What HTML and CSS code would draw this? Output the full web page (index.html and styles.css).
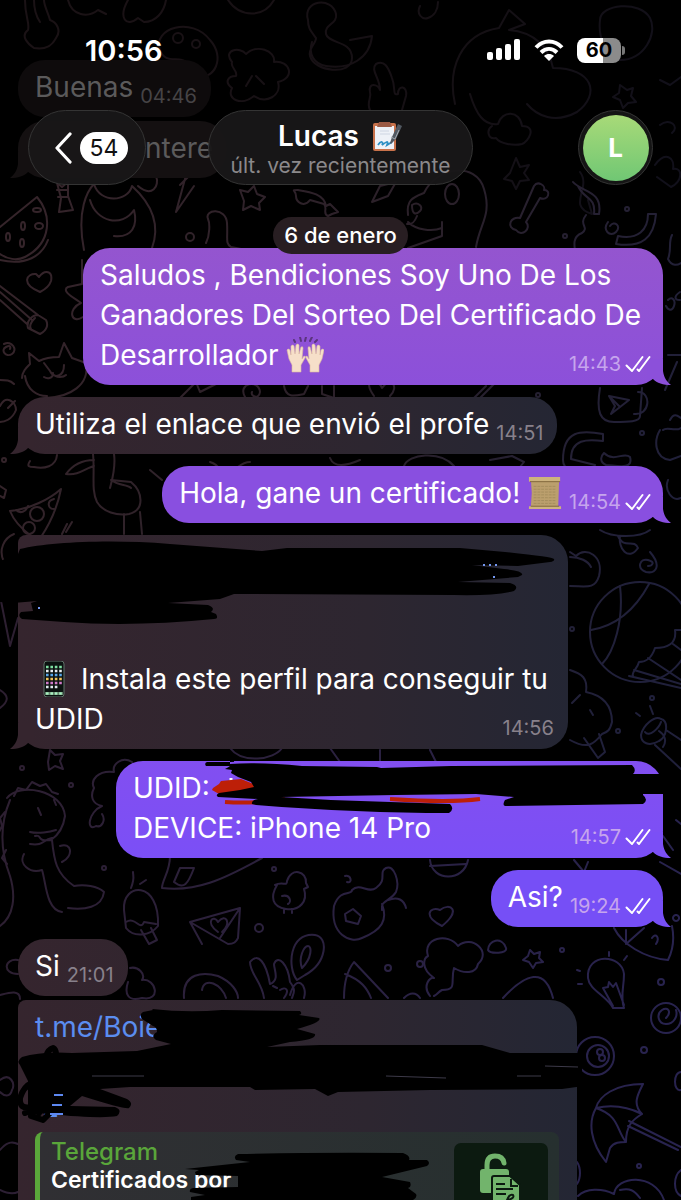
FILE: index.html
```html
<!DOCTYPE html>
<html lang="es">
<head>
<meta charset="utf-8">
<meta name="viewport" content="width=device-width, initial-scale=1">
<title>Lucas</title>
<link rel="stylesheet" href="styles.css">
</head>
<body>
<svg width="0" height="0" class="defs" aria-hidden="true">
  <symbol id="checks" viewBox="0 0 26 18">
    <path d="M1.5 10.5 7 16 17.5 2M12.5 14.5l1.5 1.5L24.500 2" fill="none" stroke="currentColor" stroke-width="2" stroke-linecap="round" stroke-linejoin="round"/>
  </symbol>
</svg>
<div class="app">
  <svg class="wallpaper" viewBox="0 0 681 1200" preserveAspectRatio="xMidYMin slice" aria-hidden="true">
    <defs>
      <linearGradient id="ink" gradientUnits="userSpaceOnUse" x1="0" y1="300" x2="681" y2="500">
        <stop offset="0" stop-color="#35242a"/><stop offset=".55" stop-color="#2a2029"/><stop offset="1" stop-color="#20203b"/>
      </linearGradient>
      <linearGradient id="ink2" gradientUnits="userSpaceOnUse" x1="0" y1="800" x2="681" y2="900">
        <stop offset="0" stop-color="#2d1f31"/><stop offset="1" stop-color="#28234f"/>
      </linearGradient>
    </defs>
    <g class="doodle faint" stroke="url(#ink)">
      <path d="M25 0c0 18 5 22 3 30-8 6 0 14 6 18 12 2 18-2 22-10 6-8 0-16-6-18-2-8-6-14-6-20M34 0c0 10 2 16 6 22M68 0c4 16 20 18 30 10l8 4M128 0c-10 18-2 28 10 18l6 4c12 0 20-10 22-22M228 0c12 18 36 18 46 0"/>
      <path d="M160 50c-8-22 32-34 50-10 16 18 4 40-12 36-10-2-6-14-16-16-8-2-18 2-22-10z"/><circle cx="178" cy="38" r="5"/><circle cx="196" cy="44" r="4"/>
      <path d="M308 20c-6-20 24-24 28-6 2 10-12 10-10 20s26 6 26 24-38 14-42-2c-2-8 6-12 6-18-6-8-8-10-8-18zM350 40l22-4c-2 22-22 34-46 30-12-2-18-12-14-24"/>
      <path d="M232 62c-10-12 8-16 14-8 10-10 30-4 28 8 16-2 22 16 4 20 4 14-12 22-24 14-12 10-28 4-22-8-8-6-4-12 4-12 2-6-6-8-4-14zM252 76l-6 10m10-10 8 8"/>
      <path d="M370 110c-4-8 2-12 0-18-2-10 8-8 10-2 0-12-10-20-4-26 8-4 12 2 16 14 4 10 0 18 6 16 0-10 10-8 8 2l-4 14"/>
      <path d="M455 104c-8-36 6-70 44-76l10-18 16 14-16 6c26 2 40 18 44 38 40 0 48 26 24 44-22 12-40 4-50-8M470 94c6 20 14 32 28 30 4-14 22-14 24 2 16 0 6 16 0 18-8 2-22 0-26-6-8 2-10-8-4-12"/>
      <path d="M600 20c0-16 40-20 50-2 8 16-6 42-30 42-14 0-22-24-20-40zM620 85l7 5 6-2-2 8 5 6-8 1-5 5-3-8-7-3 6-4zM660 80l10 5 11-8M660 125c10-8 20 2 12 8M420 6c-4 8 2 14 8 12s10-8 10-16"/>
      <path d="M516 158l4 9 9-2-5 8 5 7-9 1-4 8-4-8-8-2 6-6zM655 165c10-14 20-8 18 4 10-2 10 12-2 18l-14-10M580 172c12 16-14 34 12 42l-4-14"/>
    </g>
    <g class="doodle" stroke="url(#ink)">
      <path d="M0 227 37 197c15 18 15 46-12 60-8 4-18 2-25-3M48 240c-6 16-22 26-48 20M57 183l5 4 6-5v14l5 14-14 2 2-14zM57 190h11M58 197h10"/>
      <ellipse cx="37" cy="210" rx="4" ry="2"/><ellipse cx="23" cy="226" rx="2" ry="4"/><ellipse cx="39" cy="226" rx="4" ry="3"/><ellipse cx="8" cy="237" rx="2" ry="4"/><ellipse cx="22" cy="243" rx="2" ry="4"/>
      <path d="M84 250c-8-40 4-60 10-66 6 20 34 18 38 2 22 20 28 40 20 62M90 200c6 22 32 28 44 10 4 16-2 28-20 26M138 186c14 12 22 0 18-10M176 212l18-26M176 212l12-44M180 185l8-8"/>
      <path d="M240 190l8 2 6-6 3 8 8 3-6 6 1 7-9-4-8 4 1-9zM298 190c12 2 26 4 28 16l4-2 8 8-6 2-4 2c-6-2 0-8-4-12l-14-4c-6 8-14 2-14-4s-6-6 2-6zM206 243c4-8 4-20 2-24-4-10 18-12 19 4s-2 20 4 24l10 2"/><circle cx="190" cy="237" r="4"/>
      <path d="M408 215c-2-16 6-18 16-22 12-26 52-32 60-4 8 26-4 34-8 58M412 205c6-4 12 2 8 6s-8 4-8-6M408 222c8 8 24 10 34 6M442 222v14l-34 12M417 216c-4 10-8 8-10 8M372 202l8-16 16-4-8 14z"/><ellipse cx="452" cy="194" rx="7" ry="10"/>
      <path d="M534 186c4-6 12 0 10 4 8 0 4 12-4 8l-14 24c6 6-4 16-10 8-10-2-6-14 4-12z"/>
      <path d="M573 182c8 10 30 8 26 32h-5c2-18-10-14-16-28M656 214c-2 24-14 34-40 30l2-8c20 4 30-6 30-22zM586 215c-8 10 4 12-4 18-10 4-8 12-6 24M610 226c4-6 12 0 6 6s-14-2-8-10"/><circle cx="627" cy="209" r="2"/><circle cx="565" cy="236" r="2"/>
      <path d="M672 235c-4 8 0 14-4 24 4 8 10 6 13 4"/>
      <path d="M40 292c-20-8-13-19-4-18l3 3c6-8 14-6 12 4-2 6-7 9-11 11zM0 286l38 29M0 292l32 28M0 300l27 24M38 315c-6 0-12 6-10 13l12 6c8-4 8-10 6-14zM35 318c-4 4-6 8-4 11M82 260v24l-14 3c-8 4 8 12 13 16-14 6-10 22 2 14"/>
      <path d="M22 378c0-6 4-10 8-14l-1-11 10 8c8-4 14-4 20-4l5-14 8 15 14 5c4 22-16 34-40 35M25 376c2 14 12 20 22 20M44 363l6 8c4 8 14 6 14-6M53 373c0 6-6 6-9 4M52 373c4 6 12 4 14 2"/>
      <path d="M4 344c8-4 14 6 8 10s-12-4-6-7 4 2 4 2M0 380c6 0 10 0 14 4M0 406c6-12 16-4 16 4-4 10-12 12-16 12M8 408l7-7M30 461c-4 6 0 6 4 6 10 2 22 0 23-12"/><circle cx="4" cy="460" r="2"/>
      <path d="M10 511c20-2 40-12 51-22-4 20-12 36-20 48M10 511c4 10 12 18 20 24M54 499c-8 2-6 10 0 10M16 510c4 4 10 2 12-4M0 486l6 4-2 8-4-2"/><circle cx="37" cy="514" r="7"/><circle cx="29" cy="528" r="6"/>
      <path d="M93 454c2 20-2 36 4 48 6 10 20 14 32 12 16-4 14-22 2-32l-20-2c8 6 16 4 20 8M114 454c2 14-2 26-4 34M94 460c-12 0-22 6-28 14 12 2 20-6 28-8M124 514v20M140 512l2 22M66 532l6-10M62 534l5-10M150 470l12 10"/>
      <path d="M180 398l16-16 4 10 16-8M245 397c-8-14 14-18 15-5-1 8-10 4-8 0M284 386c2 12 10 10 20 8l4-8M322 386v8l12 4v-12M374 396c-14-20 6-16 8-8 8-12 18-2 8 8M474 398l12-12M480 398l14-14"/>
      <path d="M210 462c14 4 6 14 16 8 10 4 12-8 24-8M330 458c4 10 16 8 30 2M404 466c4-12 36-16 50 0M490 460l22-4 12 6-8 10"/>
      <path d="M600 388c-4 24 0 34 14 34 14 0 26 0 26-6l2-28M638 392c14 0 12 24-4 22M609 396l20 4-18 14 4-8zM609 396l10 10M563 460c0-30 18-30 40-26v7c-16-2-32-2-32 18l24 6-2 6c-20 0-30 0-30-11zM604 453c10 10 20-2 26 4 4 14-16 8-24 8-8-4-4-10-2-12M660 430c-6 10-6 28 10 30l11-4M663 430c4-4 12 2 18-2M670 420c4-8 8-4 11-2M668 300c4-4 8 0 6 6s-6 4-8 0M680 292c-6 4-6 8 0 8M668 355h13M665 390l12-28"/><circle cx="642" cy="433" r="2"/><circle cx="538" cy="395" r="2"/>
      <path d="M14 534c-10 4-16 16-10 28M668 480c-4 10 4 22 13 18M618 536c6 14 16 2 20 12-10 14-20 0-18-12M600 530c12 8 40 8 50 0M650 552c12 14 6 22-4 20-10-4-6-14 2-12s4 6 0 6"/>
      <path d="M570 552l6 4c10-10 28 0 23 20-4 14-14 10-29 10M570 557c10 0 18 4 21 10"/>
      <circle cx="640" cy="632" r="50"/><path d="M620 586c4 34-6 66-18 78M649 584c-14 26-34 42-58 46M681 630h-6c2 14-8 18-20 18-4 12-10 14-16 14-2 8-8 10-6 14M629 676l52 12M681 650l-8-6M634 670l47 14M648 658l33 22"/>
      <path d="M570 670c12 4 18 8 16 22 20 4 26 16 26 30-2 8-4 10-10 12-8 10-14 16-32 6M584 738l14 20 7-6-6-18M572 703l8-8M590 710l3 5M650 706l3 8M640 716l-4-3"/><circle cx="572" cy="629" r="2"/><circle cx="618" cy="731" r="2"/><circle cx="652" cy="698" r="2"/>
      <path d="M641 735c2-10 14-20 20-16 8 2 6 18-2 22-10 6-18 2-18-6zM645 732c4 6 14-4 16-10M666 730l15 10M655 745l26 24M659 731c6 4 8 10 4 16"/>
    </g>
    <g class="doodle" stroke="url(#ink2)">
      <path d="M0 596l10 50 8-28M0 690c10 6 8 12 0 18M50 750l5 5 8-1-3 7 3 8-8-3-6 4-1-8zM230 748c12 16 44 12 52 0M330 748l10 14M380 750v14M430 750l6 12"/>
      <path d="M7 798c12-16 56-8 58 18-2 14-8 20-14 24-16 2-8-6-16-4M10 800c-10 24-10 50 0 76 6 20 4 40-10 50M52 840c2 20 4 34 22 46 10-2 24 0 30 6-2 16-20 18-36 16M30 844c14 2 12-4 22-6M60 846c12-4 14 10 2 16M24 854c-6 10 6 20 18 16 4 12 4 40 20 42M14 796l4-8 8 2 6-8 8 4 6-2 6 8 6 2M5 812l-5 6 2 8-4 8M6 850l-4 8 5 6M38 808l3 7M54 800l2 5M30 832c8 2 20 0 26-2"/>
      <path d="M132 762c-10-6-20 2-18 10-16-2-24 8-20 16-4 8-2 16 8 18-14 6-16 26-6 20 6 2 10-6 6-12M170 856c0 16-8 24-8 32 34 4 60-8 100-30M180 868l14 0c-6 16-10 22-20 14z"/>
      <path d="M124 910c-2-28 36-30 34 16-8 10-24 12-32 2zM126 922c10-6 14 10 18 0l12 2M141 930l8 14 8-4-6-12M131 888c4-10 2-12 2-16M140 884l6-4"/>
      <path d="M190 922l38 22c6 0 8-2 10-6l2-30-50 14 12 22M240 908l-20 30M218 932c-14-10-4-18 0-10 8-10 14 2 4 10"/><circle cx="259" cy="928" r="4"/><circle cx="71" cy="785" r="2"/><circle cx="104" cy="868" r="2"/><circle cx="274" cy="869" r="2"/><circle cx="22" cy="768" r="2"/>
      <path d="M275 885c8-4 12 2 12-4 4-14 20-10 19 2l2 4-4 2c4 12-4 22-18 20-14-2-16-12-9-24zM282 896c8-2 10 6 6 8M284 909v4M292 909v4"/>
      <path d="M334 906c6-18 18-10 18-16 8-8 16 4 24-2 12-8 2-16 10-20s14 14 10 24c-6 10-16 8-14 18M334 906c-4 28 16 38 28 32 20-8 26-18 20-34M345 914l8-5 8 7-3 8-12-3zM388 900c10-4 16 0 18 8M345 876c6-2 8 8 2 6"/>
      <path d="M442 926c-20-10-12-20-2-16 10-8 22 0 2 16zM430 860c2 22 34 22 38 0M430 866l36-2M574 860l10 12 4-10M663 836l10 14M660 862l21 12M676 820l5 4M676 915a3 3 0 1 0 .1 0"/>
      <path d="M18 960c-14-2-16 14 0 14M0 995c8-2 20-6 20 4M130 968c8-2 16 6 12 12 14-2 20 22 0 18-14 4-18-4-14-16M0 1080c10-8 16 4 12 10-2 8-8 6-12 2M0 1150c8-10 14-8 18-6M0 1190c8 4 14 4 18 2"/>
      <path d="M184 998c-2-26 20-26 34-22 14 6 20 16 20 22M202 990c2-14 20-6 24 8M264 998c-2-16-14-24-14-36 8-10 16 0 20 22 10-4 4-14 4-20 4-10 14 0 16 18 6 8 4 10 2 16M290 995c6-22 18-10 14 3M297 980c-10-12-8-48 18-45 14 2 12 28-10 40zM302 968c-4-10 2-22 6-22s4 12-6 22M273 986l4 2M280 990c6-4 10 0 4 8"/>
      <path d="M344 998c0-14 2-26 10-36l34 36M345 974c16 6 22 14 26 24M404 998c6-6 12-6 16 0M430 996c-8-10 0-20 4-18-14-10-10-20-6-22-6-18 20-24 30-10 14-12 34 6 20 18-2 10-14 10-24 4-4 14 4 22-12 22-4 2-4 4-8 6M488 950c0-10 14-14 18-2 2 6-16 6-18 2zM503 998c22-24 42-32 50 0M530 950l4 4 6-2-1 6 4 4-7 1-3 5-4-6-6-2 5-4z"/>
      <path d="M613 1008c-6-12-24-18-25-30-2-26 34-24 36-4 0 14-4 22 0 34zM613 1006l-10-18 5-1 1-5 4 5 3-4 8 22M580 971l-3-1M609 956v-4M624 960l3-4M582 984h-4"/><circle cx="666" cy="1018" r="15"/><path d="M666 1018c6-6 2-12-4-8s-4 14 4 14 12-8 10-14"/><circle cx="595" cy="1056" r="19"/><circle cx="598" cy="1056" r="11"/><circle cx="600" cy="1052" r="3"/><circle cx="602" cy="1058" r="3"/>
      <path d="M643 1084c-28 0-44 12-47 24-8 14-6 34 10 54l4-14c4-6 10-6 16-6 0-16 6-22 16-28-10-10-4-20 1-30zM596 1108c24 8 20 22 30 34M596 1108c18-4 34 0 46 6M628 1126l50 24M629 1121l52 26M614 928c8 16 30 30 54 32 6-12 6-24 4-34M626 930l0 14 18-16M652 938c4-6 8 0 4 6M681 1072c-8 0-8 20 0 18"/><circle cx="661" cy="982" r="3"/><circle cx="644" cy="1050" r="3"/><circle cx="639" cy="1166" r="2"/><circle cx="562" cy="950" r="2"/><circle cx="420" cy="964" r="3"/><circle cx="388" cy="968" r="3"/>
      <path d="M577 1162c4 6 4 16 0 22M578 1196c8-8 24-8 36-2 2-18 40-22 50 6M620 1190c10-2 14 0 20 8M681 1170c-8 6-8 22 0 26"/>
    </g>
  </svg>

  <header class="top">
    <div class="status">
      <span class="clock">10:56</span>
      <div class="status-icons">
        <svg class="signal" viewBox="0 0 34 22" aria-label="Señal"><g fill="#fff"><rect y="13" width="6" height="8" rx="2"/><rect x="9" y="9" width="6" height="12" rx="2"/><rect x="18" y="5" width="6" height="16" rx="2"/><rect x="27" width="6" height="21" rx="2"/></g></svg>
        <svg class="wifi" viewBox="0 0 30 22" aria-label="Wi-Fi"><g fill="none" stroke="#fff" stroke-width="4"><path d="M2 8.500C9.500 .5 20.500 .5 28 8.500"/><path d="M7 13.500c5-4.800 11-4.800 16 0"/></g><path d="M10 17c3-2.600 7-2.600 10 0l-5 5z" fill="#fff"/></svg>
        <div class="battery"><span class="level">60</span></div>
      </div>
    </div>
    <nav class="nav">
      <button class="glass back" type="button" aria-label="Atrás">
        <svg class="chevron" viewBox="0 0 18 32"><path d="M16 2 3 16l13 14" fill="none" stroke="#fff" stroke-width="3.200" stroke-linecap="round" stroke-linejoin="round"/></svg>
        <span class="count">54</span>
      </button>
      <button class="glass title" type="button">
        <span class="name">Lucas
          <svg class="clip" viewBox="0 0 32 32" role="img" aria-label="Portapapeles"><rect x="2" y="3" width="23" height="28" rx="2" fill="#c8714a"/><rect x="4" y="6" width="19" height="23" fill="#eef1f7"/><path d="M8 2h11l2 5H6z" fill="#9c5b45"/><path d="M9 11h9M9 14h10" stroke="#ced5e2"/><path d="M7 25c3-5 6-3 4 0 4-3 7-5 5 0l5-3" fill="none" stroke="#2c8fc4" stroke-width="1.800"/><path d="m19 23 2-6 6-13 4 2-6 13-5 5z" fill="#515861"/><path d="m20 17 4 2 4-9" fill="none" stroke="#a5abb2"/></svg>
        </span>
        <span class="seen">últ. vez recientemente</span>
      </button>
      <button class="glass avatar" type="button"><span class="face">L</span></button>
    </nav>
  </header>

  <main class="chat">
    <div class="msg in faded joined"><p>Buenas</p><time>04:46</time></div>
    <div class="msg in faded tail behind"><p>ntere</p></div>
    <div class="date">6 de enero</div>
    <div class="msg out stacked tail tone-1">
      <p>Saludos , Bendiciones Soy Uno De Los<br>Ganadores Del Sorteo Del Certificado De<br>Desarrollador
        <svg class="emoji" viewBox="0 0 38 36" role="img" aria-label="Manos arriba"><g stroke="#5b347e" stroke-width="2" stroke-linecap="round"><path d="m8 3 1 2M14 0l1 4M20 0l-1 4M26 0l-2 4M31 3l-2 2"/></g><g fill="#f6dfc9" stroke="#dcb99f" stroke-width=".6"><path d="M3 22 1 13q1-2 3 0l1 5L5 9q2-2 3 0l1 8 1-9q2-2 3 0v9l2-7q2-1 2 1l-1 11 2-3q2 0 1 2l-4 7v7H6v-7z"/></g><g transform="matrix(-1 0 0 1 39 0)" fill="#f6dfc9" stroke="#dcb99f" stroke-width=".6"><path d="M3 22 1 13q1-2 3 0l1 5L5 9q2-2 3 0l1 8 1-9q2-2 3 0v9l2-7q2-1 2 1l-1 11 2-3q2 0 1 2l-4 7v7H6v-7z"/></g></svg></p>
      <time>14:43<svg class="checks"><use href="#checks"/></svg></time>
    </div>
    <div class="msg in tail"><p>Utiliza el enlace que envió el profe</p><time>14:51</time></div>
    <div class="msg out tail tone-2">
      <p>Hola, gane un certificado!
        <svg class="emoji scroll" viewBox="0 0 36 36" role="img" aria-label="Pergamino"><path d="M3 3h30l-1 30H3l1-15z" fill="#bb9f6d"/><path d="M1 1h33v5H1zM1 32h34v3H1z" fill="#cdb37e"/><path d="M2 6h32M3 32h30" stroke="#7d6439"/><path d="M6 11h24M6 14h24M6 17h24M6 20h24M6 23h24M6 26h24M6 29h24" stroke="#a48c5c" stroke-dasharray="3 1"/></svg></p>
      <time>14:54<svg class="checks"><use href="#checks"/></svg></time>
    </div>
    <div class="msg in stacked tail profile">
      <p>
        <svg class="emoji" viewBox="0 0 38 36" role="img" aria-label="Teléfono"><rect x="9" y="0" width="20" height="36" rx="3" fill="#0b1210" stroke="#60736a"/><g stroke-width="2.600" stroke-dasharray="2.600 1.800" fill="none"><path d="M11 6h17" stroke="#7fe0a2"/><path d="M11 10h17" stroke="#e8eef2"/><path d="M11 14h17" stroke="#58a6e8"/><path d="M11 18h17" stroke="#f0c35a"/><path d="M11 22h17" stroke="#d07ac8"/><path d="M11 26h13" stroke="#dfe9ee"/></g><path d="M10 31h18v3H10z" fill="#62836a"/><path d="M11 32.500h17" stroke="#a8f0c0" stroke-width="2.600" stroke-dasharray="2.600 1.800"/></svg>
        Instala este perfil para conseguir tu<br>UDID</p>
      <time>14:56</time>
      <svg class="marker" viewBox="0 534 575 100" aria-hidden="true"><path d="M0 560 18 553l2-5C50 541 110 538 170 543l92 7 25-3h173l45 4q48 5 49 7t-4 3l-32 4-46-1 32 4q20 2 18 6l-4 2-60 5 52 1q10 3 4 8-20 5-60 4l-220-1-14 5-52 4 40 2q8 3 3 7l5 2q3 5-2 5-80 8-150 3l-42-3q-5-3-1-7l12-1-2-8 6-2-24 2L0 601z"/><g stroke="#7397f0" stroke-width="2" stroke-dasharray="2 4"><path d="M483 564h17M493 576h3M38 607h5"/></g></svg>
    </div>
    <div class="msg out stacked tail tone-3">
      <p>UDID:<br>DEVICE: iPhone 14 Pro</p>
      <time>14:57<svg class="checks"><use href="#checks"/></svg></time>
      <svg class="marker shifted" viewBox="203 761 460 60" aria-hidden="true"><path d="M231 778v18" stroke="#fff" stroke-width="3"/><path d="m213 788 6-4 2-3 20-2 25 10-25 7-22-2-7-4z" fill="#bd1f08"/><path d="M225 802q30 2 60-3M390 799q60 4 90 0" stroke="#bd1f08" stroke-width="4" fill="none"/><path d="M230 764q30-2 72 2l75 1 4 1 70-2 181-1q5 5 1 9h30v20h-20v1q6 5 0 9l-138 2q-3-1 0-6l9-3-38-3-80 1-115 2 50 3 119 4q5 5-1 9-90 0-193-8l-4-1q-1-4 6-5l-40-2q-3-2 1-4l21-3 14-3-3-5-13-5-7-4 1-3-7-1q4-2 5-3l-24 0q-2-3 1-4l28-1-5-2q-2-2 0-4z"/></svg>
    </div>
    <div class="msg out tail tone-4"><p>Asi?</p><time>19:24<svg class="checks"><use href="#checks"/></svg></time></div>
    <div class="msg in joined"><p>Si</p><time>21:01</time></div>
    <div class="msg in wide">
      <p><a href="#">t.me/Boie</a><br><br><a href="#" class="indent">E</a></p>
      <svg class="marker" viewBox="0 999 582 130" aria-hidden="true"><path d="M152 1008q35 4 70 1l78 1q3 3-1 4l20 3q4 4-22 11l18 5q2 6-25 8l-23 5 53-2h162l28 8h80v32l-28 4-132 1-92 2-10 4-13-7-60 1-5-3H130l-30 2 27 10q7 4 2 9-3 2-47-12l-12 10 45 1q8 3 2 9-15 3-70-2l-19-2V1080l-8-16q-4-4 2-8 20-6 50-4l65-2 34-7-15-4q-6-4 1-8 0-5-4-6l-11-7q-3-5 1-7l10-2z"/><g fill="none" stroke="#000" stroke-width="6" stroke-linecap="round" stroke-linejoin="round"><path d="M44 1075q-1-25 9-28 6 3 0 20l-14 45M53 1083q-26-9-33 14-1 12 12 9 22-6 30-26M25 1112q20-9 28-3l-10 10-12-4 23-31"/></g><g stroke="#656079" fill="none"><path d="M92 1075h52M386 1075l60 2M545 1065l33 1M517 1075h24" opacity=".6"/></g><path d="M54 1094h9M52 1104h10M50 1113h13" stroke="#5d88f1" stroke-width="2"/></svg>
      <article class="card">
        <div class="card-text"><strong class="site">Telegram</strong><strong class="heading">Certificados por</strong></div>
        <svg class="thumb" viewBox="0 0 94 94" aria-hidden="true"><rect width="94" height="94" rx="7" fill="#0c1a10"/><path d="M33 28v-6q0-9 8-9t9 7" fill="none" stroke="#72b46c" stroke-width="5" stroke-linecap="round"/><rect x="26" y="26" width="29" height="24" rx="3" fill="#72b46c"/><path d="M38 35q0-2 2-2h16l10 9v28H38z" fill="#72b46c" stroke="#0c1a10" stroke-width="2"/><path d="M57 36v7h7M42 41h9M42 46h17M42 51h10" fill="none" stroke="#0c1a10" stroke-width="2"/><path d="M52 60q3-10 7-8 2 3-5 5 0 5 7 1" fill="none" stroke="#0c1a10" stroke-width="2"/></svg>
        <svg class="marker card-marker" viewBox="180 1131 260 69" aria-hidden="true"><path d="M185 1168 250 1161l-14-2q-3-4 2-6 90-2 165-1 8 3 6 7h18q4 3 0 6l-45 11 28 5q2 5-2 6l8 6q2 4-5 7H191v-4l14-2-15-3q-1-3 3-4l45-1v-11l-42-1-1-3 4-2-14-1z"/></svg>
      </article>
    </div>
  </main>
</div>
</body>
</html>
```
FILE: styles.css
```css
* { box-sizing: border-box; }
body { margin: 0; background: #000; color: #fff; font-family: Inter, "Liberation Sans", sans-serif; }
.defs { position: absolute; }
button { font: inherit; color: inherit; border: 0; padding: 0; }
p { margin: 0; }

.app { position: relative; height: 100vh; overflow: hidden; }
.wallpaper { position: absolute; inset: 0; width: 100%; height: 100%; }
.doodle { fill: none; stroke-width: 2; stroke-linecap: round; stroke-linejoin: round; }
.faint { opacity: .5; }

.top { position: absolute; inset: 0 0 auto; z-index: 2; padding-top: 34px; }
.status { display: flex; justify-content: space-between; align-items: center; height: 32px; padding: 0 57px 0 85px; }
.clock { font-size: 29px; font-weight: 600; }
.status-icons { display: flex; align-items: center; gap: 13px; }
.signal { width: 34px; height: 22px; }
.wifi { width: 30px; height: 22px; }
.battery { position: relative; width: 44px; height: 25px; margin-right: 3px; border-radius: 8px; background: linear-gradient(90deg, #fff 60%, #8b8b8b 60%); color: #000; font-size: 20px; font-weight: 700; line-height: 25px; text-align: center; }
.battery::after { content: ""; position: absolute; right: -4px; top: 8px; width: 3px; height: 9px; border-radius: 0 3px 3px 0; background: #777; }

.nav { display: grid; grid-template-columns: 1fr auto 1fr; align-items: center; margin-top: 44px; padding: 0 28px; }
.glass { height: 75px; border-radius: 38px; border: 1px solid #343434; background: rgba(24, 23, 24, .95); }
.back { justify-self: start; display: flex; align-items: center; gap: 8px; width: 118px; padding: 0 17px 0 25px; }
.chevron { width: 18px; height: 32px; }
.count { flex: 1; border-radius: 16px; background: #fff; color: #111; font-size: 23px; line-height: 32px; }
.title { display: flex; flex-direction: column; align-items: center; padding: 8px 22px 0; }
.name { display: flex; align-items: center; gap: 12px; font-size: 28px; font-weight: 600; line-height: 34px; }
.clip { width: 32px; height: 32px; }
.seen { color: #8b898b; font-size: 21px; line-height: 26px; }
.avatar { justify-self: end; display: grid; place-items: center; width: 75px; background: #151515; }
.face { width: 66px; height: 66px; border-radius: 50%; background: linear-gradient(#a8da78, #70c774); font-size: 26px; font-weight: 700; line-height: 66px; text-align: center; }

.chat { position: relative; display: flex; flex-direction: column; align-items: flex-start; padding: 60px 18px 0; }
.msg { position: relative; display: flex; align-items: flex-end; gap: 7px; margin-bottom: 12px; padding: 7px 14px 10px 17px; border-radius: 27px; font-size: 28px; line-height: 40px; white-space: nowrap; }
.msg time { color: #88818b; font-size: 20px; line-height: 22px; }
.in { background: linear-gradient(90deg, #35252e, #2d2630 350px, #232634 570px); }
.joined { margin-bottom: 4px; }
.faded { background: #0e0b0c; color: #5b5a5b; }
.faded time { color: #464446; }
.behind { padding-left: 127px; background: #141011; }
.out { align-self: flex-end; padding-right: 12px; }
.out time { display: flex; align-items: center; gap: 4px; color: #c6a5ed; }
.checks { width: 26px; height: 18px; color: #fff; }
.tone-1 { background: linear-gradient(#9455cf, #8c50da); --tail: #8c50da; }
.tone-2 { background: #894fe0; --tail: #894fe0; }
.tone-3 { background: linear-gradient(#824ff0, #7b4ff6); --tail: #7b4ff6; }
.tone-4 { background: #764ff6; --tail: #764ff6; }
.tail::after { content: ""; position: absolute; bottom: 0; width: 24px; height: 26px; background: var(--tail, #35252e); clip-path: path("M16 0L16 12C17 19 20 23 24 26C16 26 10 24 6 20L0 20L0 0Z"); }
.out.tail::after { right: -8px; }
.in.tail::after { left: -8px; transform: scaleX(-1); }
.behind.tail::after { background: #141011; }
.tail > p, .tail > time { position: relative; z-index: 1; }
.stacked { display: grid; }
.stacked > p, .stacked > time { grid-area: 1 / 1; }
.stacked > time { place-self: end; }
.tone-1 > p { padding-right: 10px; }
.emoji { width: 38px; height: 36px; vertical-align: -8px; }
.scroll { width: 34px; }

.date { align-self: center; z-index: 1; margin: 27px 0 -6px; padding: 0 11px; border-radius: 19px; background: #281e22; font-size: 22px; font-weight: 500; line-height: 37px; }

.profile { border-top-left-radius: 8px; }
.profile > p { padding: 117px 6px 0 0; }
.marker { position: absolute; z-index: 2; left: -18px; top: 0; width: 575px; height: 100px; }
.tone-3 { width: 547px; }
.shifted { left: auto; right: 0; width: 460px; height: 60px; }

.wide { display: block; width: 559px; max-width: 100%; padding-right: 18px; border-top-left-radius: 8px; }
.wide > .marker { width: 582px; height: 130px; }
.wide a { color: #5b8df0; text-decoration: none; }
.indent { padding-left: 7px; }
.card { position: relative; display: flex; justify-content: space-between; margin-top: 5px; padding: 11px; border-left: 5px solid #5aa63a; border-radius: 8px; background: linear-gradient(90deg, #302f33, #26302f); }
.card-text { display: flex; flex-direction: column; margin-top: -6px; font-size: 24px; line-height: 29px; }
.site { color: #5aa63a; font-weight: 500; }
.heading { font-weight: 600; font-size: 23px; }
.thumb { width: 94px; height: 94px; }
.card > .card-marker { left: 140px; width: 260px; height: 69px; }
```
